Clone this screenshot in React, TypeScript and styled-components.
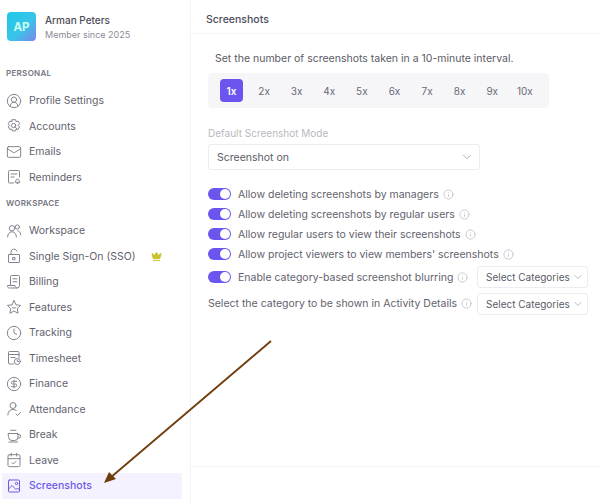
import type { ReactNode } from "react";
import styled, { createGlobalStyle } from "styled-components";
import { CalendarCheck, ChevronDown, CircleDollarSign, CircleUserRound, Clock, Crown, Info, Mail } from "lucide-react";

const GlobalStyle = createGlobalStyle`
  html, body {
    margin: 0;
    padding: 0;
    background: #fff;
  }
  body {
    font-family: Inter, "Liberation Sans", sans-serif;
    color: #55555f;
  }
`;

const Page = styled.div`
  position: relative;
  display: flex;
  width: 600px;
  height: 504px;
  overflow: hidden;
`;

const Sidebar = styled.aside`
  box-sizing: border-box;
  width: 191px;
  flex: none;
  padding: 12px 8px 0 2px;
  border-right: 1px solid #f3f3f8;
`;

const Profile = styled.div`
  display: flex;
  align-items: center;
  gap: 9px;
  padding-left: 5px;
  height: 29px;
  margin-bottom: 24px;
`;

const Avatar = styled.div`
  width: 29px;
  height: 29px;
  border-radius: 4px;
  background: linear-gradient(135deg, #1fc8e8 0%, #38c4ea 55%, #7c86ea 100%);
  color: #c9fff2;
  font-size: 11.5px;
  font-weight: 700;
  display: flex;
  align-items: center;
  justify-content: center;
`;

const ProfileText = styled.div`
  display: flex;
  flex-direction: column;
  gap: 3px;
`;

const ProfileName = styled.div`
  font-size: 10px;
  font-weight: 500;
  line-height: 12px;
  color: #4d4d59;
`;

const ProfileSince = styled.div`
  font-size: 9px;
  line-height: 11px;
  color: #8b8b96;
`;

const SectionLabel = styled.div`
  height: 16px;
  line-height: 16px;
  padding-left: 4px;
  font-size: 8px;
  font-weight: 600;
  letter-spacing: 0.3px;
  color: #75757f;
  margin-bottom: 7px;
`;

const NavItem = styled.div<{ $active?: boolean }>`
  display: flex;
  align-items: center;
  gap: 7px;
  height: 25.5px;
  width: 180px;
  padding-left: 4px;
  box-sizing: border-box;
  border-radius: 2px;
  font-size: 10.5px;
  color: ${(p) => (p.$active ? "#6b5ce7" : "#62626d")};
  font-weight: ${(p) => (p.$active ? 500 : 400)};
  background: ${(p) => (p.$active ? "#f5f2ff" : "transparent")};
  svg {
    flex: none;
    color: ${(p) => (p.$active ? "#6b5ce7" : "#85858f")};
  }
`;

const NavGroup = styled.div`
  margin-bottom: 5px;
`;

const CrownMark = styled(Crown)`
  margin-left: 8px;
  && {
    color: #c8c32b;
    fill: #c8c32b;
  }
`;

const Main = styled.main`
  flex: 1;
  display: flex;
  flex-direction: column;
  min-width: 0;
`;

const Header = styled.header`
  height: 34px;
  flex: none;
  box-sizing: border-box;
  padding: 13px 0 0 15px;
  font-size: 10.5px;
  font-weight: 500;
  line-height: 13px;
  color: #4d4d59;
  border-bottom: 1px solid #f3f3f8;
`;

const Content = styled.div`
  flex: 1;
  padding: 18px 0 0 17px;
  border-bottom: 1px solid #f3f3f8;
  margin-bottom: 37px;
`;

const Lead = styled.p`
  margin: 0 0 7px 7px;
  font-size: 10.5px;
  line-height: 14px;
  color: #5b5b66;
`;

const Segments = styled.div`
  display: flex;
  align-items: center;
  box-sizing: border-box;
  width: 341px;
  height: 35px;
  padding-left: 12px;
  border-radius: 4px;
  background: #f6f6f9;
  margin-bottom: 19px;
`;

const Segment = styled.div<{ $active?: boolean }>`
  width: 23px;
  height: 23px;
  margin-right: 9.6px;
  border-radius: 4px;
  display: flex;
  align-items: center;
  justify-content: center;
  font-size: 10px;
  font-weight: ${(p) => (p.$active ? 600 : 400)};
  color: ${(p) => (p.$active ? "#fff" : "#6a6a75")};
  background: ${(p) => (p.$active ? "#6a55ee" : "transparent")};
`;

const FieldLabel = styled.div`
  font-size: 10px;
  line-height: 13px;
  color: #b9b9c2;
  margin-bottom: 4px;
`;

const SelectBox = styled.div<{ $width: number }>`
  display: flex;
  align-items: center;
  justify-content: space-between;
  box-sizing: border-box;
  width: ${(p) => p.$width}px;
  height: 26px;
  padding: 0 5px 0 8px;
  border: 1px solid #ececf1;
  border-radius: 3px;
  background: #fff;
  font-size: 10.5px;
  color: #5b5b66;
  svg {
    color: #8f8f99;
    flex: none;
  }
`;

const ModeSelect = styled(SelectBox)`
  margin-bottom: 14px;
`;

const Options = styled.div`
  display: flex;
  flex-direction: column;
`;

const OptionRow = styled.div<{ $height: number }>`
  display: flex;
  align-items: center;
  height: ${(p) => p.$height}px;
  font-size: 10.5px;
  color: #62626d;
`;

const Toggle = styled.span`
  position: relative;
  flex: none;
  width: 23px;
  height: 12px;
  margin-right: 7px;
  border-radius: 6px;
  background: #6a55ee;
  &::after {
    content: "";
    position: absolute;
    right: 1px;
    top: 1px;
    width: 10px;
    height: 10px;
    border-radius: 50%;
    background: #fff;
  }
`;

const InfoMark = styled(Info)`
  flex: none;
  margin-left: 4px;
  color: #b5b5bd;
`;

const RowSelect = styled(SelectBox)`
  position: absolute;
  left: 477px;
  padding: 0 3px 0 8px;
  height: 22px;
  font-size: 10px;
`;

const Arrow = styled.svg`
  position: absolute;
  left: 0;
  top: 0;
  pointer-events: none;
`;

const NavIcon = ({ children }: { children: ReactNode }) => (
  <svg width="16" height="16" viewBox="0 0 16 16" fill="none" stroke="currentColor" strokeWidth="1" strokeLinecap="round" strokeLinejoin="round">
    {children}
  </svg>
);

const AccountsIcon = () => (
  <NavIcon>
    <path d="M6.3 1.7h3.2l.6 1.9 1.9-.5 1.6 2.7-1.4 1.5 1.4 1.5-1.6 2.7-1.9-.5-.6 1.9H6.3l-.6-1.9-1.9.5-1.6-2.7 1.4-1.5-1.4-1.5 1.6-2.7 1.9.5z" />
    <circle cx="7.6" cy="7.5" r="2.1" />
    <path d="M9.2 9l2 2.2" />
  </NavIcon>
);

const RemindersIcon = () => (
  <NavIcon>
    <path d="M7.5 14H3.5a1 1 0 0 1-1-1V2.5a1 1 0 0 1 1-1h9a1 1 0 0 1 1 1V8" />
    <path d="M5 5h6M5 8h3" />
    <path d="M9.3 13c.6-.6.4-3 2.2-3s1.6 2.4 2.2 3zM11 14.5h1" />
  </NavIcon>
);

const WorkspaceIcon = () => (
  <NavIcon>
    <circle cx="6" cy="5.3" r="2.7" />
    <path d="M1.6 14c0-3 1.9-5.2 4.4-5.2s4.4 2.2 4.4 5.2" />
    <circle cx="11.3" cy="4" r="2.1" />
    <path d="M11.8 7.8c1.6.2 2.8 1.7 3 4" />
  </NavIcon>
);

const LockIcon = () => (
  <NavIcon>
    <rect x="2.5" y="6.5" width="11" height="8" rx="0.5" />
    <path d="M5 6.5V4a3 3 0 0 1 5.8-1" />
    <rect x="7" y="9.5" width="2" height="2.2" />
  </NavIcon>
);

const BillingIcon = () => (
  <NavIcon>
    <path d="M4.5 11.5V2.5a1 1 0 0 1 1-1h7a1 1 0 0 1 1 1v9a2.5 2.5 0 0 1-2.5 2.5H3.5a2 2 0 0 1-2-2.5H9c0 1.5 1 2.5 2 2.5" />
    <path d="M7 4.8h4M7 7.8h4" />
  </NavIcon>
);

const FeaturesIcon = () => (
  <NavIcon>
    <path d="M8 1.5l2 4.3 4.6.6-3.4 3.2.9 4.7L8 12l-4.1 2.3.9-4.7-3.4-3.2 4.6-.6z" />
    <path d="M6 8.3c.8 1.3 3.2 1.3 4 0" />
  </NavIcon>
);

const TimesheetIcon = () => (
  <NavIcon>
    <path d="M7.5 14H3.5a1 1 0 0 1-1-1V2.5a1 1 0 0 1 1-1H12a1 1 0 0 1 1 1v5" />
    <path d="M2.5 4.5H13M5 7.5h4" />
    <circle cx="11.3" cy="11.5" r="3" />
    <path d="M11.3 10v1.5h1.3" />
  </NavIcon>
);

const AttendanceIcon = () => (
  <NavIcon>
    <circle cx="7" cy="4.5" r="3" />
    <path d="M1.8 14c0-3.5 2.3-5.5 5.2-5.5 1.2 0 2.3.3 3.2.9" />
    <path d="M10 13l1.5 1.5 3-3" />
  </NavIcon>
);

const BreakIcon = () => (
  <NavIcon>
    <path d="M2.5 6.5H12V10a3.5 3.5 0 0 1-3.5 3.5H6A3.5 3.5 0 0 1 2.5 10z" />
    <path d="M12 7.5h1a1.5 1.5 0 0 1 0 3.5h-1.2" />
    <path d="M4.5 3.3H10M3 15h8.5" />
  </NavIcon>
);

const ImageIcon = () => (
  <NavIcon>
    <rect x="2.5" y="2" width="11" height="12" rx="1" />
    <path d="M2.5 11L6 7.5l4 4 1.5-1.5 2 2" />
    <circle cx="10.5" cy="5.5" r="1.2" />
  </NavIcon>
);

const personal: [string, ReactNode][] = [
  ["Profile Settings", <CircleUserRound size={16} strokeWidth={1.5} />],
  ["Accounts", <AccountsIcon />],
  ["Emails", <Mail size={16} strokeWidth={1.5} />],
  ["Reminders", <RemindersIcon />],
];

const workspace: [string, ReactNode][] = [
  ["Workspace", <WorkspaceIcon />],
  ["Single Sign-On (SSO)", <LockIcon />],
  ["Billing", <BillingIcon />],
  ["Features", <FeaturesIcon />],
  ["Tracking", <Clock size={16} strokeWidth={1.5} />],
  ["Timesheet", <TimesheetIcon />],
  ["Finance", <CircleDollarSign size={16} strokeWidth={1.5} />],
  ["Attendance", <AttendanceIcon />],
  ["Break", <BreakIcon />],
  ["Leave", <CalendarCheck size={16} strokeWidth={1.5} />],
  ["Screenshots", <ImageIcon />],
];

const rates = ["1x", "2x", "3x", "4x", "5x", "6x", "7x", "8x", "9x", "10x"];

const toggles = [
  "Allow deleting screenshots by managers",
  "Allow deleting screenshots by regular users",
  "Allow regular users to view their screenshots",
  "Allow project viewers to view members' screenshots",
];

const App = () => (
  <Page>
    <GlobalStyle />
    <Sidebar>
      <Profile>
        <Avatar>AP</Avatar>
        <ProfileText>
          <ProfileName>Arman Peters</ProfileName>
          <ProfileSince>Member since 2025</ProfileSince>
        </ProfileText>
      </Profile>
      <SectionLabel>PERSONAL</SectionLabel>
      <NavGroup>
        {personal.map(([label, icon]) => (
          <NavItem key={label}>
            {icon}
            {label}
          </NavItem>
        ))}
      </NavGroup>
      <SectionLabel>WORKSPACE</SectionLabel>
      {workspace.map(([label, icon]) => (
        <NavItem key={label} $active={label === "Screenshots"}>
          {icon}
          {label}
          {label.startsWith("Single") && <CrownMark size={11} />}
        </NavItem>
      ))}
    </Sidebar>
    <Main>
      <Header>Screenshots</Header>
      <Content>
        <Lead>Set the number of screenshots taken in a 10-minute interval.</Lead>
        <Segments>
          {rates.map((r) => (
            <Segment key={r} $active={r === "1x"}>
              {r}
            </Segment>
          ))}
        </Segments>
        <FieldLabel>Default Screenshot Mode</FieldLabel>
        <ModeSelect $width={272}>
          Screenshot on
          <ChevronDown size={14} strokeWidth={1.2} />
        </ModeSelect>
        <Options>
          {toggles.map((t) => (
            <OptionRow key={t} $height={20}>
              <Toggle />
              {t}
              <InfoMark size={11} strokeWidth={1.5} />
            </OptionRow>
          ))}
          <OptionRow $height={26}>
            <Toggle />
            Enable category-based screenshot blurring
            <InfoMark size={11} strokeWidth={1.5} />
            <RowSelect $width={111}>
              Select Categories
              <ChevronDown size={12} strokeWidth={1.2} />
            </RowSelect>
          </OptionRow>
          <OptionRow $height={27}>
            Select the category to be shown in Activity Details
            <InfoMark size={11} strokeWidth={1.5} />
            <RowSelect $width={111}>
              Select Categories
              <ChevronDown size={12} strokeWidth={1.2} />
            </RowSelect>
          </OptionRow>
        </Options>
      </Content>
    </Main>
    <Arrow width="600" height="504" viewBox="0 0 600 504">
      <line x1="271" y1="341" x2="110" y2="478" stroke="#6f3d0c" strokeWidth="1.8" />
      <polygon points="104,483 109,472 116,479" fill="#6f3d0c" />
    </Arrow>
  </Page>
);

export default App;
